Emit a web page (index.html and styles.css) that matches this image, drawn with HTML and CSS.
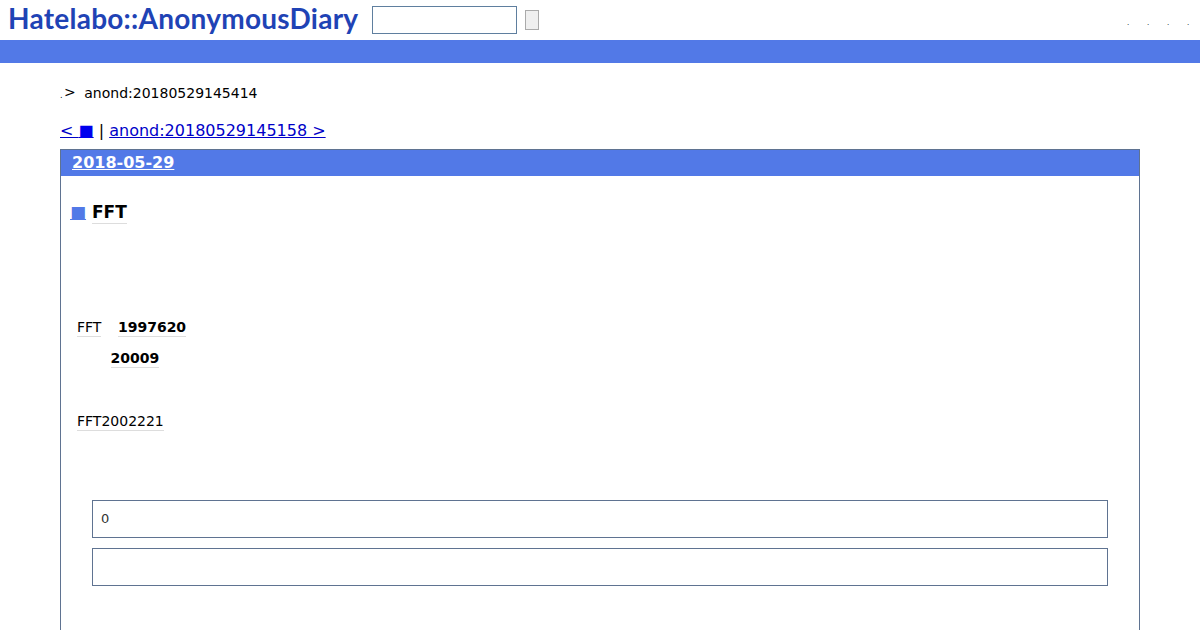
FILE: index.html
```html
<!DOCTYPE html>
<html lang="en">
<head>
    <meta charset="UTF-8">
    <title>anond:20180529145414</title>
    <link rel="stylesheet" href="styles.css">
</head>
<body>
    <div class="top">
        <a class="logo" href="#">Hatelabo::AnonymousDiary</a>
        <input class="searchbox" type="text">
        <button class="searchbtn"></button>
        <div class="toplinks">
            <span>.</span><span>.</span><span>.</span><span>.</span>
        </div>
    </div>
    <div class="bluebar"></div>

    <div class="main">
        <p class="crumb"><span class="dot">.</span><span class="arrow">&gt;</span><span class="here">anond:20180529145414</span></p>
        <p class="pager"><a href="#">&lt; <span class="sq">■</span></a> | <a href="#">anond:20180529145158 &gt;</a></p>

        <div class="day">
            <h2 class="dayhead"><a href="#">2018-05-29</a></h2>
            <div class="body">
                <h3 class="title"><a class="mark" href="#">■</a> <span class="kw">FFT</span></h3>

                <p class="line"><span class="kw">FFT</span><b class="kw gap1">1997620</b></p>
                <p class="line"><b class="kw gap2">20009</b></p>
                <p class="line last"><span class="kw">FFT2002221</span></p>

                <div class="box">0</div>
                <div class="box"></div>
            </div>
        </div>
    </div>
</body>
</html>
```
FILE: styles.css
```css
body {
    margin: 0;
    font-family: "DejaVu Sans", sans-serif;
    font-size: 14px;
    color: #000;
    background: #fff;
    height: 630px;
    overflow: hidden;
}

.top {
    height: 40px;
    display: flex;
    align-items: center;
    padding-left: 8px;
}
.logo {
    font-family: "Lato", sans-serif;
    font-weight: 700;
    font-size: 28px;
    letter-spacing: 0.25px;
    line-height: 34px;
    margin-top: -5px;
    color: #1f43b5;
    text-decoration: none;
    width: 364px;
    white-space: nowrap;
}
.searchbox {
    width: 145px;
    height: 28px;
    box-sizing: border-box;
    border: 1px solid #5f7f9f;
    background: #fff;
    padding: 0;
}
.searchbtn {
    width: 14px;
    height: 20px;
    box-sizing: border-box;
    margin-left: 8px;
    border: 1px solid #aaa;
    background: #efefef;
    padding: 0;
}
.toplinks {
    margin-left: auto;
    display: flex;
    gap: 16px;
    padding-right: 10px;
    font-size: 7px;
    color: #000;
    line-height: 8px;
    margin-top: 6px;
}
.toplinks span {
    width: 4px;
    text-align: center;
}
.bluebar {
    height: 23px;
    background: #5279e7;
}

.main {
    padding: 0 60px;
}
.crumb {
    margin: 0;
    padding-top: 21px;
    line-height: 16px;
    white-space: pre;
}
.crumb .dot {
    font-size: 8px;
}
.crumb .arrow {
    margin-left: 1.5px;
    vertical-align: 1px;
}
.crumb .here {
    margin-left: 8.5px;
}
.pager {
    margin: 0;
    padding-top: 17px;
    font-size: 16px;
    line-height: 19px;
    height: 28px;
}
.pager a {
    color: #0000c8;
}
.sq {
    color: #0000ee;
}

.day {
    border: 1px solid #5f7391;
    border-bottom: 0;
}
.dayhead {
    margin: 0;
    height: 26px;
    line-height: 26px;
    padding-left: 11px;
    background: #5279e7;
    font-size: 16px;
}
.dayhead a {
    color: #fff;
}
.body {
    padding: 0 31px 60px 31px;
}
.title {
    margin: 0 0 0 -21px;
    padding-top: 26px;
    height: 117px;
    font-size: 17px;
    line-height: 20px;
}
.mark {
    color: #5279e7;
    font-size: 17px;
    padding: 0 1px;
    margin: 0 -1px 0 -2px;
}
.kw {
    border-bottom: 1px solid #ddd;
    padding-bottom: 1px;
}
.line {
    margin: 0 0 0 -15px;
    line-height: 17px;
    height: 31px;
}
.line.last {
    margin-top: 32px;
    height: 87px;
}
.gap1 {
    margin-left: 16.5px;
}
.gap2 {
    margin-left: 33.5px;
}
.box {
    height: 36px;
    line-height: 36px;
    border: 1px solid #5f7391;
    margin-bottom: 10px;
    padding-left: 8px;
    font-size: 13px;
    color: #333;
}
```
